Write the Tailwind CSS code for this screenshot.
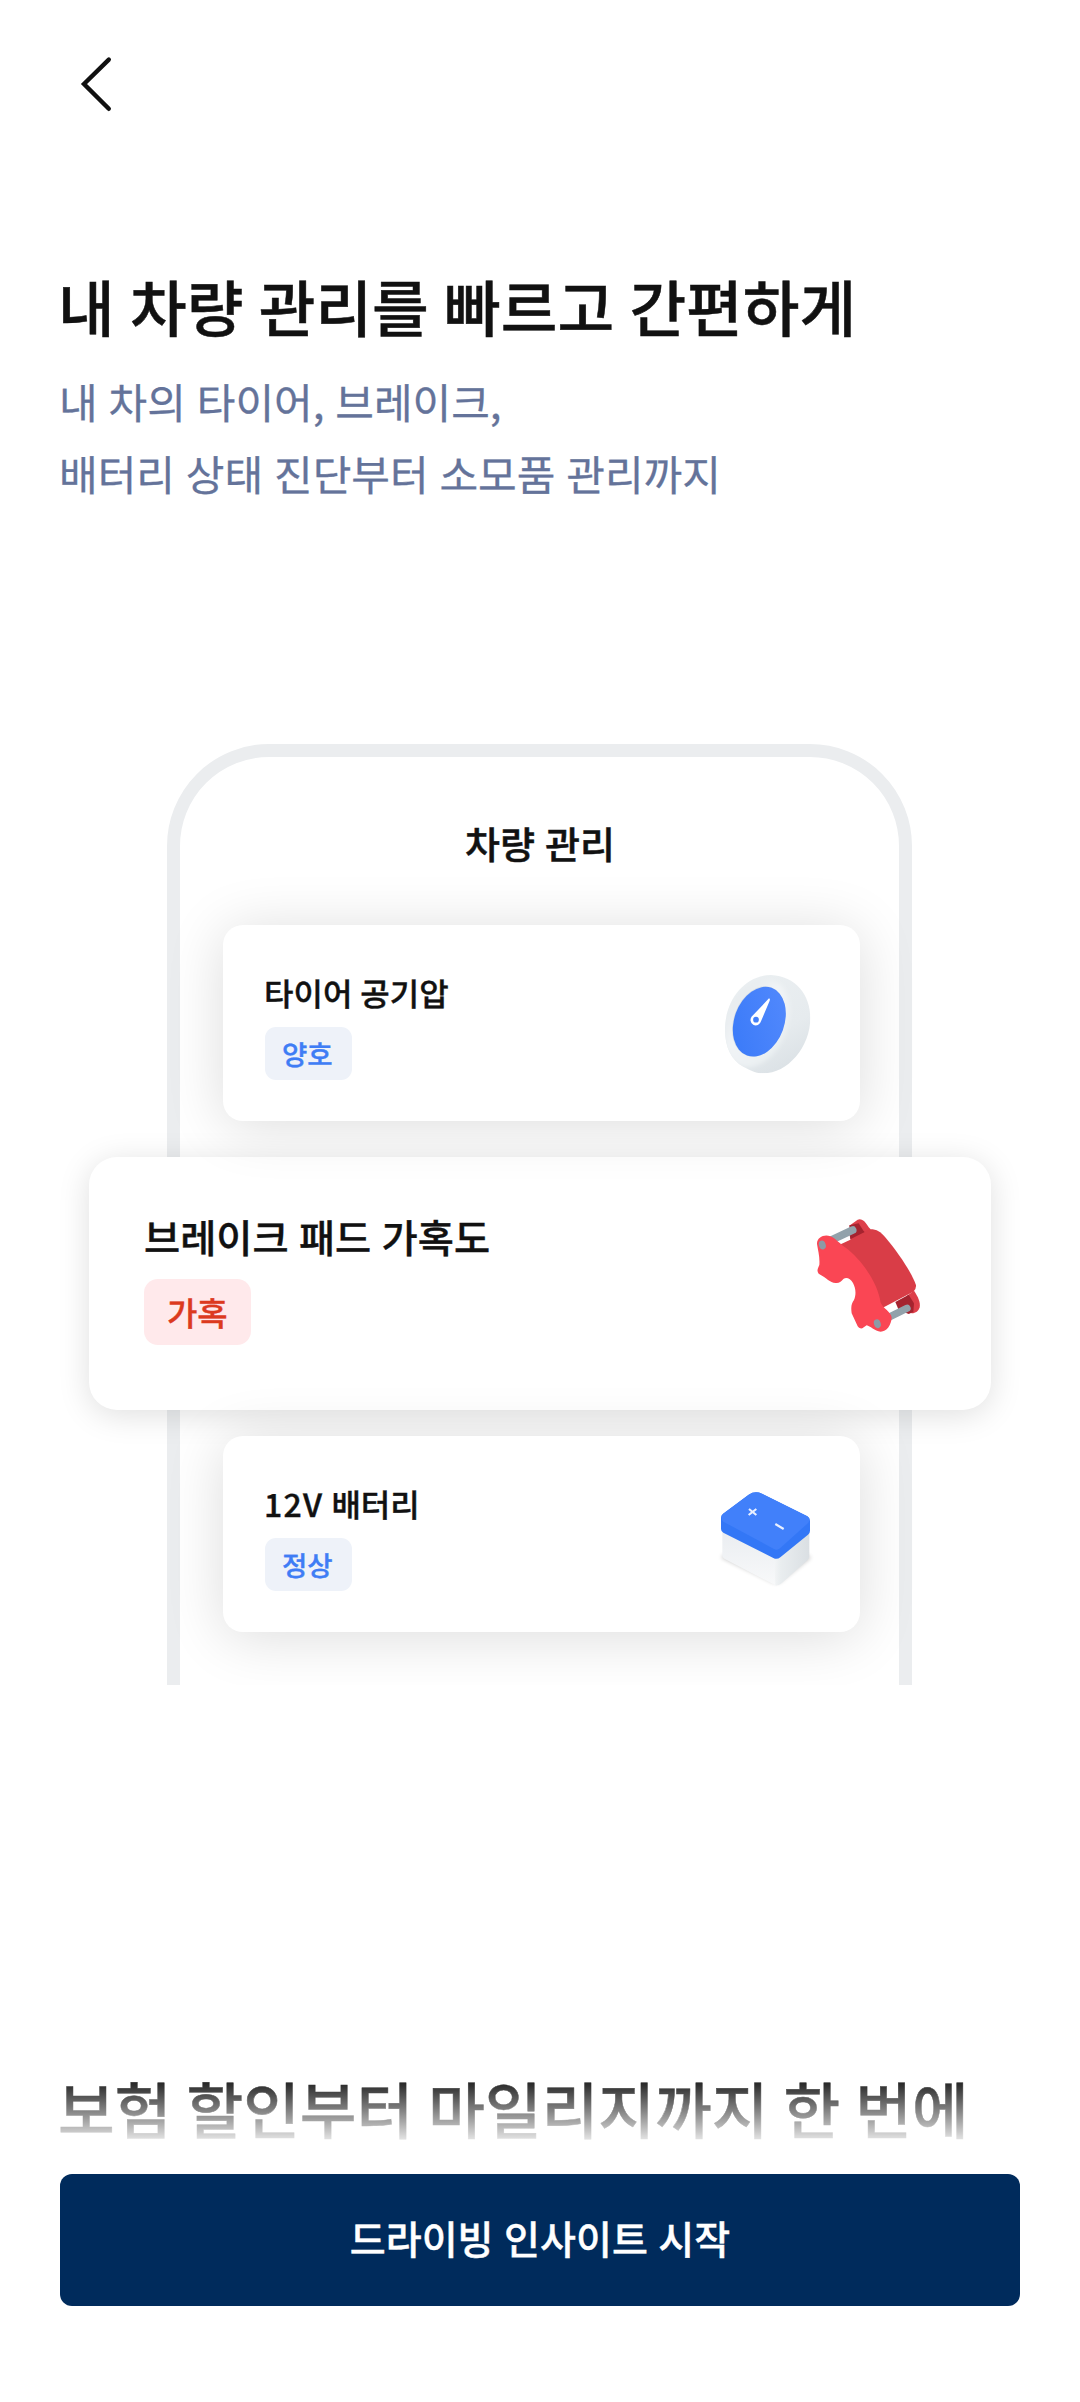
<!DOCTYPE html>
<html>
<head>
<meta charset="utf-8">
<title>드라이빙 인사이트</title>
<script src="https://cdn.jsdelivr.net/npm/@tailwindcss/browser@4"></script>
</head>
<body class="bg-white">
<main class="relative flex h-[2402px] w-[1080px] flex-col overflow-hidden bg-white font-['Noto_Sans_CJK_KR',sans-serif] text-[#111] whitespace-nowrap [text-rendering:geometricPrecision]">
  <header class="flex h-[168px] shrink-0 items-start px-[70px] pt-[54px]">
    <svg class="h-[60px] w-[60px]" viewBox="0 0 60 60" fill="none" stroke="#111" stroke-width="4.4" stroke-linecap="round"><path d="M38.8 5.6 14 30 38.8 54.8"/></svg>
  </header>

  <section class="mt-[98px] flex flex-col pl-[58px]">
    <h1 class="text-[61.6px] leading-[80px] font-medium [word-spacing:1.5px] [-webkit-text-stroke:0.5px_#111]">내 차량 관리를 빠르고 간편하게</h1>
    <p class="mt-5 pl-px text-[42px] leading-[72px] text-[#64739a] [word-spacing:1.5px] [-webkit-text-stroke:0.3px_#64739a]">내 차의 타이어, 브레이크,<br>배터리 상태 진단부터 소모품 관리까지</p>
  </section>

  <section class="relative mt-[234px] h-[941px] shrink-0 overflow-x-visible overflow-y-clip">
    <!-- phone outline behind the cards -->
    <div class="absolute top-0 left-[167.4px] h-[1041px] w-[745px] rounded-t-[102px] border-[13px] border-[#ebedef]"></div>
    <div class="relative flex flex-col items-center">
      <h2 class="mt-[75px] text-[38px] leading-[48px] font-medium [word-spacing:1.5px] [-webkit-text-stroke:0.5px_#111]">차량 관리</h2>

      <article class="relative z-10 mt-[58px] ml-[3px] flex h-[196px] w-[637px] justify-between rounded-[20px] bg-white pr-5 pl-[41px] shadow-[0_5px_58px_rgba(0,0,0,0.14)]">
        <div class="flex flex-col items-start pt-[48px]">
          <h3 class="text-[32px] leading-10 font-medium [word-spacing:0.8px] [-webkit-text-stroke:0.4px_#111]">타이어 공기압</h3>
          <span class="mt-[14px] ml-px h-[53px] w-[87px] rounded-[11px] bg-[#eef2f9] pl-[17px] text-[27.5px] leading-[53px] font-medium text-[#3f7df5] [-webkit-text-stroke:0.4px_#3f7df5]">양호</span>
        </div>
        <svg class="mt-[25px] h-[140px] w-[140px]" viewBox="0 0 420 420">
          <defs>
            <linearGradient id="gb" x1="0.2" y1="0" x2="0.75" y2="1"><stop offset="0" stop-color="#edf1f3"/><stop offset=".6" stop-color="#e6ebee"/><stop offset="1" stop-color="#d3dadf"/></linearGradient>
            <linearGradient id="gr" x1="0" y1="0" x2="1" y2=".5"><stop offset="0" stop-color="#e3e8eb"/><stop offset=".5" stop-color="#f1f4f6"/><stop offset="1" stop-color="#ebf0f2"/></linearGradient>
            <linearGradient id="gf" x1="0" y1="1" x2="1" y2="0"><stop offset="0" stop-color="#3879f8"/><stop offset="1" stop-color="#548afd"/></linearGradient>
            <filter id="soft" x="-20%" y="-20%" width="140%" height="140%"><feGaussianBlur stdDeviation="7"/></filter>
            <clipPath id="gc"><path d="M75 240C75 150 133 76 213 75C287 78 331 136 331 203C331 292 262 370 190 370C162 370 148 358 130 350C94 330 75 292 75 240Z"/></clipPath>
          </defs>
          <g clip-path="url(#gc)">
            <rect width="420" height="420" fill="url(#gb)"/>
            <ellipse cx="172" cy="220" rx="90" ry="137" fill="url(#gr)" transform="rotate(22 172 220)" filter="url(#soft)"/>
          </g>
          <ellipse cx="176" cy="214" rx="75" ry="109" fill="#d9dfe4" transform="rotate(20 176 214)"/>
          <ellipse cx="178" cy="215" rx="75" ry="108" fill="url(#gf)" transform="rotate(20 178 215)"/>
          <path d="M207 145Q211 146 209 152L183 214A16 16 0 1 1 156 199Z" fill="#fff"/>
          <circle cx="168" cy="209" r="8.5" fill="#4280fa"/>
        </svg>
      </article>

      <article class="relative mt-[36px] flex h-[253px] w-[902px] justify-between rounded-[28px] bg-white pr-[41px] pl-[55px] shadow-[0_5px_32px_rgba(0,0,0,0.13)]">
        <div class="flex flex-col items-start pt-[56px]">
          <h3 class="text-[39.3px] leading-[48px] font-medium [word-spacing:1.5px] [-webkit-text-stroke:0.4px_#111]">브레이크 패드 가혹도</h3>
          <span class="mt-[18px] h-[66px] w-[107px] rounded-[14px] bg-[#ffe9eb] pl-[23px] text-[33px] leading-[66px] font-medium text-[#dc3a1e] [-webkit-text-stroke:0.4px_#dc3a1e]">가혹</span>
        </div>
        <svg class="mt-[43px] h-[150px] w-[160px]" viewBox="0 0 480 450">
          <path d="M178 77L203 59Q212 55 222 63C230 70 233 80 242 88L225 108Z" fill="#dd3f4a"/>
          <path d="M178 76L206 70L224 98L180 122Z" fill="#a5232f"/>
          <path d="M350 288L372 272C384 290 392 307 389 322C386 334 375 341 364 340Z" fill="#dd3f4a"/>
          <path d="M316 306L356 284L372 310L370 336L356 342L326 330Z" fill="#a5232f"/>
          <path d="M140 132L240 88C262 88 270 95 287 113C330 163 370 228 378 256Q379 268 370 275L284 320L262 330Z" fill="#d93d47"/>
          <path d="M140 122L184 104L181 119L152 133Z" fill="#fff"/>
          <path d="M178 98L206 84L224 96L181 118Z" fill="#a5232f"/>
          <path d="M126 119L188 90" stroke="#92a2ab" stroke-width="23" stroke-linecap="round"/>
          <path d="M292 354L351 325" stroke="#92a2ab" stroke-width="22" stroke-linecap="round"/>
          <path d="M81 132C80 112 103 102 121 109C140 117 148 131 165 142C215 178 264 250 272 308C280 326 302 334 305 352C304 376 290 395 272 395C254 393 240 378 230 376L217 385Q207 387 203 379L185 340C182 318 185 310 192 300C200 282 196 262 189 249C181 235 170 231 161 236C151 246 148 250 137 249C118 247 112 235 86 221C79 212 84 205 88 195C90 170 84 152 81 132Z" fill="#fa4654"/>
          <ellipse cx="97" cy="135" rx="10" ry="13.5" fill="#8d9aa6" transform="rotate(-20 97 135)"/>
          <ellipse cx="262" cy="371" rx="10" ry="13.5" fill="#8d9aa6" transform="rotate(-20 262 371)"/>
        </svg>
      </article>

      <article class="relative z-10 mt-[26px] ml-[3px] flex h-[196px] w-[637px] justify-between rounded-[20px] bg-white pr-5 pl-[41px] shadow-[0_5px_58px_rgba(0,0,0,0.14)]">
        <div class="flex flex-col items-start pt-[48px]">
          <h3 class="text-[32px] leading-10 font-medium [word-spacing:0.8px] [-webkit-text-stroke:0.4px_#111]"><span class="tracking-[1.3px]">12V</span> 배터리</h3>
          <span class="mt-[14px] ml-px h-[53px] w-[87px] rounded-[11px] bg-[#eef2f9] pl-[17px] text-[27.5px] leading-[53px] font-medium text-[#3f7df5] [-webkit-text-stroke:0.4px_#3f7df5]">정상</span>
        </div>
        <svg class="mt-[34px] h-[130px] w-[140px]" viewBox="0 0 420 390">
          <defs>
            <linearGradient id="bl" x1="0" y1="0" x2="0" y2="1"><stop offset="0" stop-color="#e9ecf0"/><stop offset="1" stop-color="#f8f9fa"/></linearGradient>
            <linearGradient id="br" x1="0" y1="0" x2="1" y2="0"><stop offset="0" stop-color="#f3f5f6"/><stop offset=".2" stop-color="#e9edef"/><stop offset="1" stop-color="#dadfe3"/></linearGradient>
          </defs>
          <path d="M62 262L180 200L334 262L240 337L222 339Z" fill="#000" opacity=".22" filter="url(#soft)"/>
          <path d="M67 170L67 256Q67 263 73 266L220 343Q232 349 232 346V240Z" fill="url(#bl)"/>
          <path d="M328 170V259Q328 266 322 271L243 341Q236 347 226 346L222 240Z" fill="url(#br)"/>
          <path d="M63 143Q63 136 69 131L146 74Q165 61 186 71L322 139Q330 144 330 152V182Q330 189 324 194L241 262Q231 270 220 264L70 188Q63 184 63 177Z" fill="#3377f6"/>
          <path d="M64 142Q64 136 70 131L146 74Q165 61 186 71L322 139Q330 144 328 152Q327 157 322 161L240 235Q232 242 222 237L70 155Q64 150 64 142Z" fill="#4180fa"/>
          <path d="M147 117L169 135M169 117L146 135M226 162L251 177" stroke="#e9f0ff" stroke-width="6.5"/>
        </svg>
      </article>
    </div>
  </section>

  <section class="mt-[383px] pl-[58px]">
    <h2 class="text-[61.6px] leading-[80px] font-medium [word-spacing:1.3px] [-webkit-text-stroke:0.5px_#111]">보험 할인부터 마일리지까지 한 번에</h2>
  </section>

  <!-- bottom action bar, overlaying the scrolled content -->
  <footer class="absolute inset-x-0 bottom-0 flex h-[326px] flex-col">
    <div class="h-[72px] bg-linear-to-b from-white/0 to-white"></div>
    <div class="grow bg-white px-[60px] pt-[26px]">
      <button class="block h-[132px] w-full rounded-xl bg-[#002b5c] pb-1.5 text-[39.1px] font-medium text-white [word-spacing:1.7px] [-webkit-text-stroke:0.4px_#fff]">드라이빙 인사이트 시작</button>
    </div>
  </footer>
</main>
</body>
</html>
